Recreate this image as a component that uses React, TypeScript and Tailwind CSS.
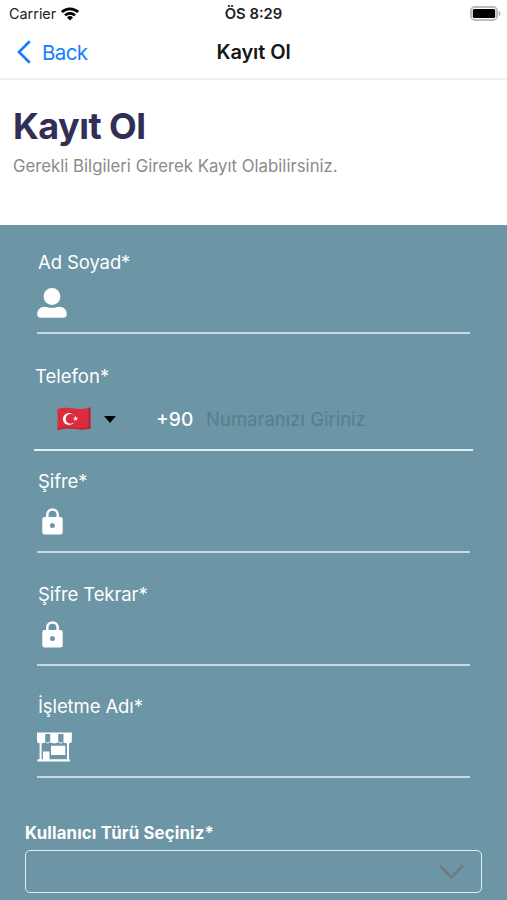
import React from "react";
import clsx from "clsx";

const WifiIcon = () => (
  <svg viewBox="0 0 18 14" className="w-[18px] h-[14px]" fill="none" stroke="#000" strokeWidth="2.7">
    <path d="M0.9 5.1a11.6 11.6 0 0 1 16.2 0" />
    <path d="M4 8.4a7.1 7.1 0 0 1 10 0" />
    <path d="M9 13.4 6 10.4a4.3 4.3 0 0 1 6 0z" fill="#000" stroke="none" />
  </svg>
);

const BatteryIcon = () => (
  <svg viewBox="0 0 32 16" className="w-8 h-4">
    <rect x="1" y="1" width="26" height="13" rx="3.8" fill="#fff" stroke="#bcbcbc" strokeWidth="2" />
    <rect x="2.8" y="3" width="22.4" height="9" rx="1.5" fill="#000" />
    <path d="M28.7 5c2.2 1 2.2 4.2 0 5.2z" fill="#a8a8a8" />
  </svg>
);

const UserIcon = () => (
  <svg viewBox="0 0 30 30" className="w-[30px] h-[30px] mt-1" fill="#fff">
    <circle cx="15" cy="8.5" r="8.4" />
    <path d="M7.5 18.700c2 0 3 1.100 7.500 1.100s5.500-1.100 7.500-1.100c4.500 0 7.300 3.300 7.300 7.500 0 2.200-1.300 3.600-3.300 3.600h-23c-2 0-3.300-1.400-3.300-3.600 0-4.200 2.800-7.500 7.300-7.500z" />
  </svg>
);

const LockIcon = () => (
  <svg viewBox="0 0 21 27" className="w-[21px] h-[27px] ml-[5px] mt-0.5" fill="none">
    <path d="M5.3 10V6.600a5.200 5.200 0 0 1 10.400 0V10" stroke="#fff" strokeWidth="2.5" />
    <path
      fill="#fff"
      fillRule="evenodd"
      d="M2.600 8.900h15.800a2.300 2.300 0 0 1 2.300 2.300v13a2.300 2.300 0 0 1-2.300 2.300H2.600a2.300 2.300 0 0 1-2.300-2.300v-13a2.300 2.300 0 0 1 2.300-2.300zM10.500 15.100a2.500 2.500 0 1 0 0 5 2.500 2.500 0 0 0 0-5z"
    />
  </svg>
);

const StoreIcon = () => (
  <svg viewBox="0 0 35 30" className="w-[35px] h-[30px] mt-1" fill="#fff">
    <path d="M0 0.5h35v1.500H0z" />
    <path d="M0 1h8.200v8q0 2.300-2.300 2.300H2.300Q0 11.300 0 9zM13.200 1h8v8q0 2.300-2.300 2.300h-3.400q-2.300 0-2.300-2.300zM26.500 1h8.300v8q0 2.300-2.300 2.300h-3.700q-2.300 0-2.300-2.300z" />
    <path d="M8 9.200q0.800 1.800 2.700 1.800t2.700-1.800M21 9.200q0.800 1.800 2.800 1.800t2.800-1.800" fill="none" stroke="#fff" strokeWidth="0.9" />
    <path d="M2.600 10h2v18h-2zM30 10h2v18h-2zM0.500 27.300h32.300v2.200H0.500zM6 19.500h6.500v8H6zM14 13.800h14.300v9.200H14z" />
  </svg>
);

const TurkishFlag = () => (
  <svg viewBox="0 0 34 24" className="w-[34px] h-6 ml-px">
    <path d="M0.500 2.200C7 -0.200 11 0.800 17 1.600S28 2 33.500 0.500V21.400C27 23.500 22 22.500 17 21.800S7 21 0.500 23.300z" fill="#dc2c3b" />
    <path d="M31 1.100 33.500 0.500V21.400L31 22z" fill="#b12b3b" />
    <path d="M0.500 22.300C7 20 12 20.900 17 21.200s11 1.100 16.500-0.700" fill="none" stroke="#b62536" strokeWidth="1.3" />
    <circle cx="12" cy="12" r="6.1" fill="#fff" />
    <circle cx="13.600" cy="11.900" r="4.900" fill="#dc2c3b" />
    <path d="m18.500 8.800.7 1.900 2-.1-1.500 1.300.7 1.900-1.700-1-1.600 1.200.5-2-1.700-1.100 2-.2z" fill="#fff" />
  </svg>
);

const Header = () => (
  <header className="h-20 border-b-2 border-[#efefef]">
    <div className="h-7 grid grid-cols-3 items-center text-[#222]">
      <div className="flex items-center gap-[5px] pl-[9px]">
        <span className="text-[14.4px]">Carrier</span>
        <WifiIcon />
      </div>
      <div className="text-center font-semibold text-[14.8px]">ÖS 8:29</div>
      <div className="flex justify-end pr-[5px]">
        <BatteryIcon />
      </div>
    </div>
    <div className="h-[50px] grid grid-cols-3 items-center">
      <div className="flex items-center gap-[11px] pl-[17px] text-[#157efb]">
        <svg viewBox="0 0 14 24" className="w-[14px] h-6 -mt-0.5" fill="none" stroke="currentColor" strokeWidth="2.7">
          <path d="M12.8 1.3 2 12l10.8 10.7" />
        </svg>
        <span className="text-[20.5px] tracking-[-0.6px]">Back</span>
      </div>
      <h1 className="-mt-0.5 text-center font-semibold text-[20px] tracking-[-0.1px] text-[#161616]">Kayıt Ol</h1>
    </div>
  </header>
);

type FieldProps = {
  label: string;
  icon: React.ReactNode;
  className?: string;
};

const Field = ({ label, icon, className }: FieldProps) => (
  <div className={clsx("mx-[37px] h-[84px] border-b-2 border-[#c5dbe3]", className)}>
    <div className="h-6 leading-6 text-[18.5px] tracking-[-0.1px] pl-px">{label}</div>
    <div className="h-[58px] flex items-center pb-1">{icon}</div>
  </div>
);

const PhoneField = () => (
  <div className="mx-[34px] mt-[30px] h-[87px] border-b-2 border-[#dcf0f5]">
    <div className="h-6 leading-6 text-[18.5px] pl-px">Telefon*</div>
    <div className="h-[61px] flex items-center pl-[22px]">
      <TurkishFlag />
      <svg viewBox="0 0 12 7" className="w-3 h-[7px] ml-[13px] mt-0.5">
        <path d="M0 0h12L6 7z" />
      </svg>
      <span className="ml-[40px] mt-px w-[50px] text-[19.2px] font-medium">+90</span>
      <span className="mt-0.5 text-[18.5px] text-[#587e8e]">Numaranızı Giriniz</span>
    </div>
  </div>
);

const App = () => {
  return (
    <div className="h-[900px] w-full overflow-hidden bg-white font-['Inter',sans-serif]">
      <Header />
      <div className="h-[145px] pl-[13px] pt-6">
        <h2 className="h-11 leading-[44px] text-[36px] tracking-[-0.55px] font-bold text-[#322f56]">Kayıt Ol</h2>
        <p className="mt-1.5 leading-6 text-[16.75px] text-[#8b8b8b]">
          Gerekli Bilgileri Girerek Kayıt Olabilirsiniz.
        </p>
      </div>
      <div className="h-[675px] bg-[#6c95a5] pt-[25px] text-white">
        <Field label="Ad Soyad*" icon={<UserIcon />} />
        <PhoneField />
        <Field label="Şifre*" icon={<LockIcon />} className="mt-[18px]" />
        <Field label="Şifre Tekrar*" icon={<LockIcon />} className="mt-[29px]" />
        <Field label="İşletme Adı*" icon={<StoreIcon />} className="mt-7" />
        <div className="mx-[25px] mt-[42px]">
          <div className="h-[30px] leading-[26px] text-[16.8px] tracking-[0.15px] font-bold">Kullanıcı Türü Seçiniz*</div>
          <div className="h-[43px] flex items-center justify-end rounded-[5px] border border-[#dcedf3] pr-[17px]">
            <svg viewBox="0 0 26 16" className="w-[26px] h-4" fill="none" stroke="#74797f" strokeWidth="2.8">
              <path d="M2 1.5 13.5 13.5 25 1.5" />
            </svg>
          </div>
        </div>
      </div>
    </div>
  );
};

export default App;
